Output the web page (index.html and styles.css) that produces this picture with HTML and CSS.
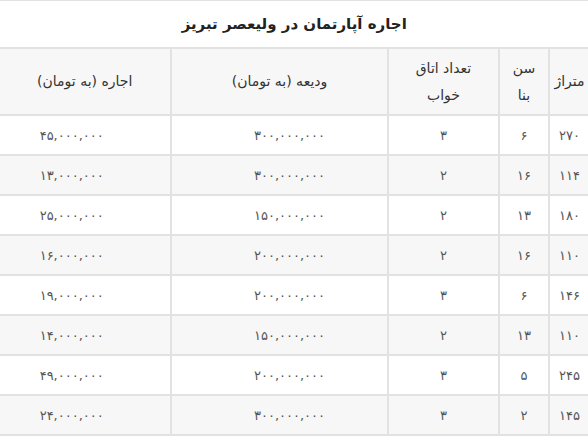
FILE: index.html
```html
<!DOCTYPE html>
<html lang="fa" dir="rtl">
<head>
<meta charset="utf-8">
<link rel="stylesheet" href="styles.css">
</head>
<body>
<table class="rent">
  <colgroup>
    <col class="c-area"><col class="c-age"><col class="c-rooms"><col class="c-deposit"><col class="c-rent">
  </colgroup>
  <thead>
    <tr class="title-row"><th colspan="5" class="title">اجاره آپارتمان در ولیعصر تبریز</th></tr>
    <tr class="head-row">
      <th>متراژ</th>
      <th>سن<br>بنا</th>
      <th>تعداد اتاق<br>خواب</th>
      <th>ودیعه (به تومان)</th>
      <th>اجاره (به تومان)</th>
    </tr>
  </thead>
  <tbody>
    <tr><td>۲۷۰</td><td>۶</td><td>۳</td><td class="dep">۳۰۰,۰۰۰,۰۰۰</td><td class="amt">۴۵,۰۰۰,۰۰۰</td></tr>
    <tr><td>۱۱۴</td><td>۱۶</td><td>۲</td><td class="dep">۳۰۰,۰۰۰,۰۰۰</td><td class="amt">۱۳,۰۰۰,۰۰۰</td></tr>
    <tr><td>۱۸۰</td><td>۱۳</td><td>۲</td><td class="dep">۱۵۰,۰۰۰,۰۰۰</td><td class="amt">۲۵,۰۰۰,۰۰۰</td></tr>
    <tr><td>۱۱۰</td><td>۱۶</td><td>۲</td><td class="dep">۲۰۰,۰۰۰,۰۰۰</td><td class="amt">۱۶,۰۰۰,۰۰۰</td></tr>
    <tr><td>۱۴۶</td><td>۶</td><td>۳</td><td class="dep">۲۰۰,۰۰۰,۰۰۰</td><td class="amt">۱۹,۰۰۰,۰۰۰</td></tr>
    <tr><td>۱۱۰</td><td>۱۳</td><td>۲</td><td class="dep">۱۵۰,۰۰۰,۰۰۰</td><td class="amt">۱۴,۰۰۰,۰۰۰</td></tr>
    <tr><td>۲۴۵</td><td>۵</td><td>۳</td><td class="dep">۲۰۰,۰۰۰,۰۰۰</td><td class="amt">۴۹,۰۰۰,۰۰۰</td></tr>
    <tr><td>۱۴۵</td><td>۲</td><td>۳</td><td class="dep">۳۰۰,۰۰۰,۰۰۰</td><td class="amt">۲۴,۰۰۰,۰۰۰</td></tr>
  </tbody>
</table>
</body>
</html>
```
FILE: styles.css
```css
html, body {
  margin: 0;
  padding: 0;
  background: #fff;
  overflow: hidden;
}
body {
  font-family: "DejaVu Sans", "Noto Sans", sans-serif;
  color: #333;
}
.rent {
  border-collapse: collapse;
  table-layout: fixed;
  width: 591px;
  margin-right: -3px;
}
.c-area { width: 41px; }
.c-age { width: 50px; }
.c-rooms { width: 111px; }
.c-deposit { width: 217px; }
.c-rent { width: 172px; }
.rent th, .rent td {
  border: 2px solid #e2e2e2;
  text-align: center;
  vertical-align: middle;
  padding: 0 4px;
}
.title-row th {
  height: 46px;
  font-size: 15px;
  font-weight: bold;
  color: #222;
  background: #fff;
  border-top-width: 1px;
  border-left-width: 1px;
}
.head-row th {
  height: 65px;
  font-size: 14px;
  font-weight: normal;
  line-height: 27px;
  color: #333;
  background: #f7f7f7;
}
.head-row th:last-child,
.rent td:last-child {
  border-left-width: 1px;
}
.rent td {
  height: 38px;
  font-size: 13px;
  color: #555;
}
.rent td.amt {
  padding-right: 30px;
}
.rent td.dep {
  padding-left: 24px;
}
.rent tbody tr:nth-child(even) td {
  background: #f7f7f7;
}
```
